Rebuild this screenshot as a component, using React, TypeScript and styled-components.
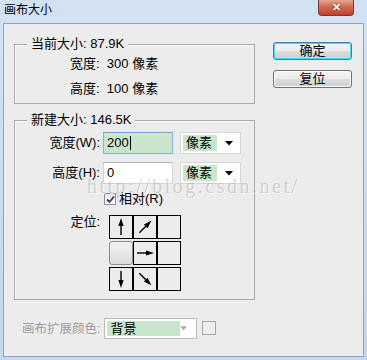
import styled, { createGlobalStyle } from "styled-components";

const GlobalStyle = createGlobalStyle`
  html, body {
    margin: 0;
    padding: 0;
    background: #c9daee;
  }
  body {
    font-family: "Liberation Sans", "Noto Sans CJK SC", sans-serif;
    font-size: 13px;
    color: #000;
  }
`;

const Arrow = ({ angle }: { angle: number }) => (
  <svg width="22" height="22" viewBox="0 0 22 22">
    <g transform={`rotate(${angle} 11 11)`}>
      <line x1="11" y1="19" x2="11" y2="7" stroke="#000" strokeWidth="1.4" />
      <polygon points="11,2 8.4,10 13.6,10" fill="#000" />
    </g>
  </svg>
);

const DropArrow = ({ muted }: { muted?: boolean }) => (
  <svg width="8" height="5" viewBox="0 0 8 5">
    <polygon points="0,0 8,0 4,4.5" fill={muted ? "#a8a8a8" : "#000"} />
  </svg>
);

const cells = [
  { angle: 0 },
  { angle: 45 },
  {},
  { selected: true },
  { angle: 90 },
  {},
  { angle: 180 },
  { angle: 135 },
  {},
];

const App = () => {
  return (
    <>
      <GlobalStyle />
      <Window>
        <TitleBar>
          <Title>画布大小</Title>
          <CloseButton>✕</CloseButton>
        </TitleBar>
        <Panel>
          <LeftColumn>
            <Group>
              <Legend>当前大小: 87.9K</Legend>
              <InfoRows>
                <InfoRow>宽度:&nbsp; 300 像素</InfoRow>
                <InfoRow>高度:&nbsp; 100 像素</InfoRow>
              </InfoRows>
            </Group>

            <Group $top={16}>
              <Legend>新建大小: 146.5K</Legend>
              <FormGrid>
                <Label>宽度(W):</Label>
                <Controls>
                  <TextInput $focused>
                    200<Caret />
                  </TextInput>
                  <UnitSelect>
                    <SelectValue>像素</SelectValue>
                    <DropArrow />
                  </UnitSelect>
                </Controls>

                <Label>高度(H):</Label>
                <Controls>
                  <TextInput>0</TextInput>
                  <UnitSelect>
                    <SelectValue>像素</SelectValue>
                    <DropArrow />
                  </UnitSelect>
                </Controls>

                <span />
                <CheckRow>
                  <CheckBox>
                    <svg width="9" height="9" viewBox="0 0 9 9">
                      <polyline
                        points="1,4.5 3.5,7 8,1.5"
                        fill="none"
                        stroke="#2b3c64"
                        strokeWidth="1.8"
                      />
                    </svg>
                  </CheckBox>
                  相对(R)
                </CheckRow>

                <AnchorLabel>定位:</AnchorLabel>
                <AnchorGrid>
                  {cells.map((c, i) =>
                    c.selected ? (
                      <SelectedCell key={i} />
                    ) : (
                      <AnchorCell key={i}>
                        {c.angle !== undefined && <Arrow angle={c.angle} />}
                      </AnchorCell>
                    )
                  )}
                </AnchorGrid>
              </FormGrid>
            </Group>

            <ExtendRow>
              <MutedLabel>画布扩展颜色:</MutedLabel>
              <ColorSelect>
                <SelectValue $wide>背景</SelectValue>
                <DropArrow muted />
              </ColorSelect>
              <Swatch />
            </ExtendRow>
          </LeftColumn>

          <ButtonColumn>
            <Button $primary>确定</Button>
            <Button>复位</Button>
          </ButtonColumn>

          <Watermark>http://blog.csdn.net/</Watermark>
        </Panel>
      </Window>
    </>
  );
};
export default App;

const Window = styled.div`
  width: 367px;
  height: 360px;
  box-sizing: border-box;
  display: flex;
  flex-direction: column;
  padding: 0 3px 3px 3px;
  background: linear-gradient(180deg, #d3e2f3 0%, #c4d7ee 100%);
`;

const TitleBar = styled.div`
  height: 23px;
  display: flex;
  align-items: flex-start;
  flex-shrink: 0;
`;

const Title = styled.div`
  font-size: 12px;
  line-height: 20px;
  padding-left: 1px;
  color: #000;
`;

const CloseButton = styled.div`
  margin-left: auto;
  margin-right: 10px;
  width: 36px;
  height: 16px;
  box-sizing: border-box;
  border: 1px solid #7a3a2e;
  border-top: none;
  border-radius: 0 0 4px 4px;
  background: linear-gradient(180deg, #e8a593 0%, #d26a50 45%, #c1412a 100%);
  color: #fff;
  font-size: 11px;
  font-weight: bold;
  line-height: 15px;
  text-align: center;
  text-shadow: 0 0 2px #5a1a10;
`;

const Panel = styled.div`
  position: relative;
  flex: 1;
  box-sizing: border-box;
  background: #ececec;
  border: 1px solid #8ea3bd;
  display: flex;
  padding: 20px 0 0 10px;
`;

const LeftColumn = styled.div`
  width: 241px;
  display: flex;
  flex-direction: column;
`;

const Group = styled.div<{ $top?: number }>`
  position: relative;
  margin-top: ${(p) => p.$top ?? 0}px;
  border: 1px solid #a9a9a9;
  box-shadow: inset 1px 1px 0 #fafafa;
`;

const Legend = styled.div`
  position: absolute;
  top: -9px;
  left: 12px;
  padding: 0 4px;
  background: #ececec;
  line-height: 16px;
`;

const InfoRows = styled.div`
  display: flex;
  flex-direction: column;
  gap: 5px;
  padding: 9px 0 4px 55px;
`;

const InfoRow = styled.div`
  line-height: 20px;
`;

const FormGrid = styled.div`
  display: grid;
  grid-template-columns: 85px 1fr;
  column-gap: 3px;
  row-gap: 8px;
  align-items: center;
  padding: 11px 0 8px 0;
`;

const Label = styled.div`
  text-align: right;
  line-height: 22px;
`;

const AnchorLabel = styled(Label)`
  align-self: start;
  line-height: 14px;
`;

const Controls = styled.div`
  display: flex;
  gap: 7px;
  align-items: center;
`;

const TextInput = styled.div<{ $focused?: boolean }>`
  width: 70px;
  height: 22px;
  box-sizing: border-box;
  border: 1px solid ${(p) => (p.$focused ? "#8fb2da" : "#d4d4d4")};
  border-top-color: ${(p) => (p.$focused ? "#7fa3cf" : "#b0b0b0")};
  background: ${(p) => (p.$focused ? "#c9e6cc" : "#ffffff")};
  box-shadow: ${(p) => (p.$focused ? "0 0 0 1px #dbe8f6" : "none")};
  padding: 0 3px;
  line-height: 20px;
  display: flex;
  align-items: center;
`;

const Caret = styled.span`
  display: inline-block;
  width: 1px;
  height: 14px;
  background: #000;
  margin-left: 1px;
`;

const UnitSelect = styled.div`
  width: 61px;
  height: 22px;
  box-sizing: border-box;
  border: 1px solid #d6d6d6;
  background: #ffffff;
  display: flex;
  align-items: center;
  padding: 2px 7px 2px 2px;
  gap: 8px;
`;

const SelectValue = styled.div<{ $wide?: boolean }>`
  flex: ${(p) => (p.$wide ? "0 0 70px" : "1")};
  align-self: stretch;
  background: #c9e6cc;
  padding-left: 3px;
  line-height: 16px;
  color: #000;
  margin-right: ${(p) => (p.$wide ? "auto" : "0")};
`;

const CheckRow = styled.div`
  display: flex;
  align-items: center;
  gap: 3px;
  line-height: 16px;
  margin-left: 1px;
  margin-top: -1px;
`;

const CheckBox = styled.div`
  width: 12px;
  height: 12px;
  box-sizing: border-box;
  border: 1px solid #8e8f8f;
  background: linear-gradient(180deg, #e6e6e6, #ffffff);
  display: flex;
  align-items: center;
  justify-content: center;
`;

const AnchorGrid = styled.div`
  display: grid;
  grid-template-columns: repeat(3, 24px);
  grid-auto-rows: 24px;
  row-gap: 2px;
  margin-left: 6px;
`;

const AnchorCell = styled.div`
  box-sizing: border-box;
  border: 1px solid #000;
  display: flex;
  align-items: center;
  justify-content: center;
`;

const SelectedCell = styled.div`
  box-sizing: border-box;
  border: 1px solid #8d8d8d;
  border-radius: 3px;
  background: linear-gradient(180deg, #f2f2f2 0%, #dcdcdc 100%);
`;

const ExtendRow = styled.div`
  display: flex;
  align-items: center;
  margin-top: 18px;
  padding-left: 8px;
`;

const MutedLabel = styled.div`
  white-space: nowrap;
  font-size: 12.5px;
  margin-right: 4px;
  color: #9d9d9d;
  line-height: 20px;
`;

const ColorSelect = styled.div`
  width: 93px;
  height: 21px;
  box-sizing: border-box;
  border: 1px solid #bcbcbc;
  background: #ffffff;
  display: flex;
  align-items: center;
  padding: 2px 9px 2px 2px;
`;

const Swatch = styled.div`
  width: 14px;
  height: 14px;
  box-sizing: border-box;
  border: 1px solid #a7a7a7;
  margin-left: 5px;
  margin-top: -2px;
`;

const ButtonColumn = styled.div`
  display: flex;
  flex-direction: column;
  gap: 10px;
  margin-left: 18px;
`;

const Button = styled.div<{ $primary?: boolean }>`
  width: 79px;
  height: 18px;
  box-sizing: border-box;
  margin-top: ${(p) => (p.$primary ? "-2px" : "0")};
  border: 1px solid ${(p) => (p.$primary ? "#3c7fb1" : "#707070")};
  border-radius: 3px;
  background: linear-gradient(180deg, #f4f4f4 0%, #ebebeb 48%, #dddddd 52%, #cfcfcf 100%);
  box-shadow: ${(p) => (p.$primary ? "inset 0 0 0 1px #48d9f9" : "inset 0 0 0 1px #fcfcfc")};
  text-align: center;
  line-height: 16px;
`;

const Watermark = styled.div`
  position: absolute;
  left: 83px;
  top: 151px;
  font-family: "Liberation Serif", serif;
  font-size: 20px;
  letter-spacing: 2.5px;
  color: rgba(165, 165, 165, 0.45);
  text-shadow: 1px 1px 0 rgba(255, 255, 255, 0.6);
  pointer-events: none;
`;
